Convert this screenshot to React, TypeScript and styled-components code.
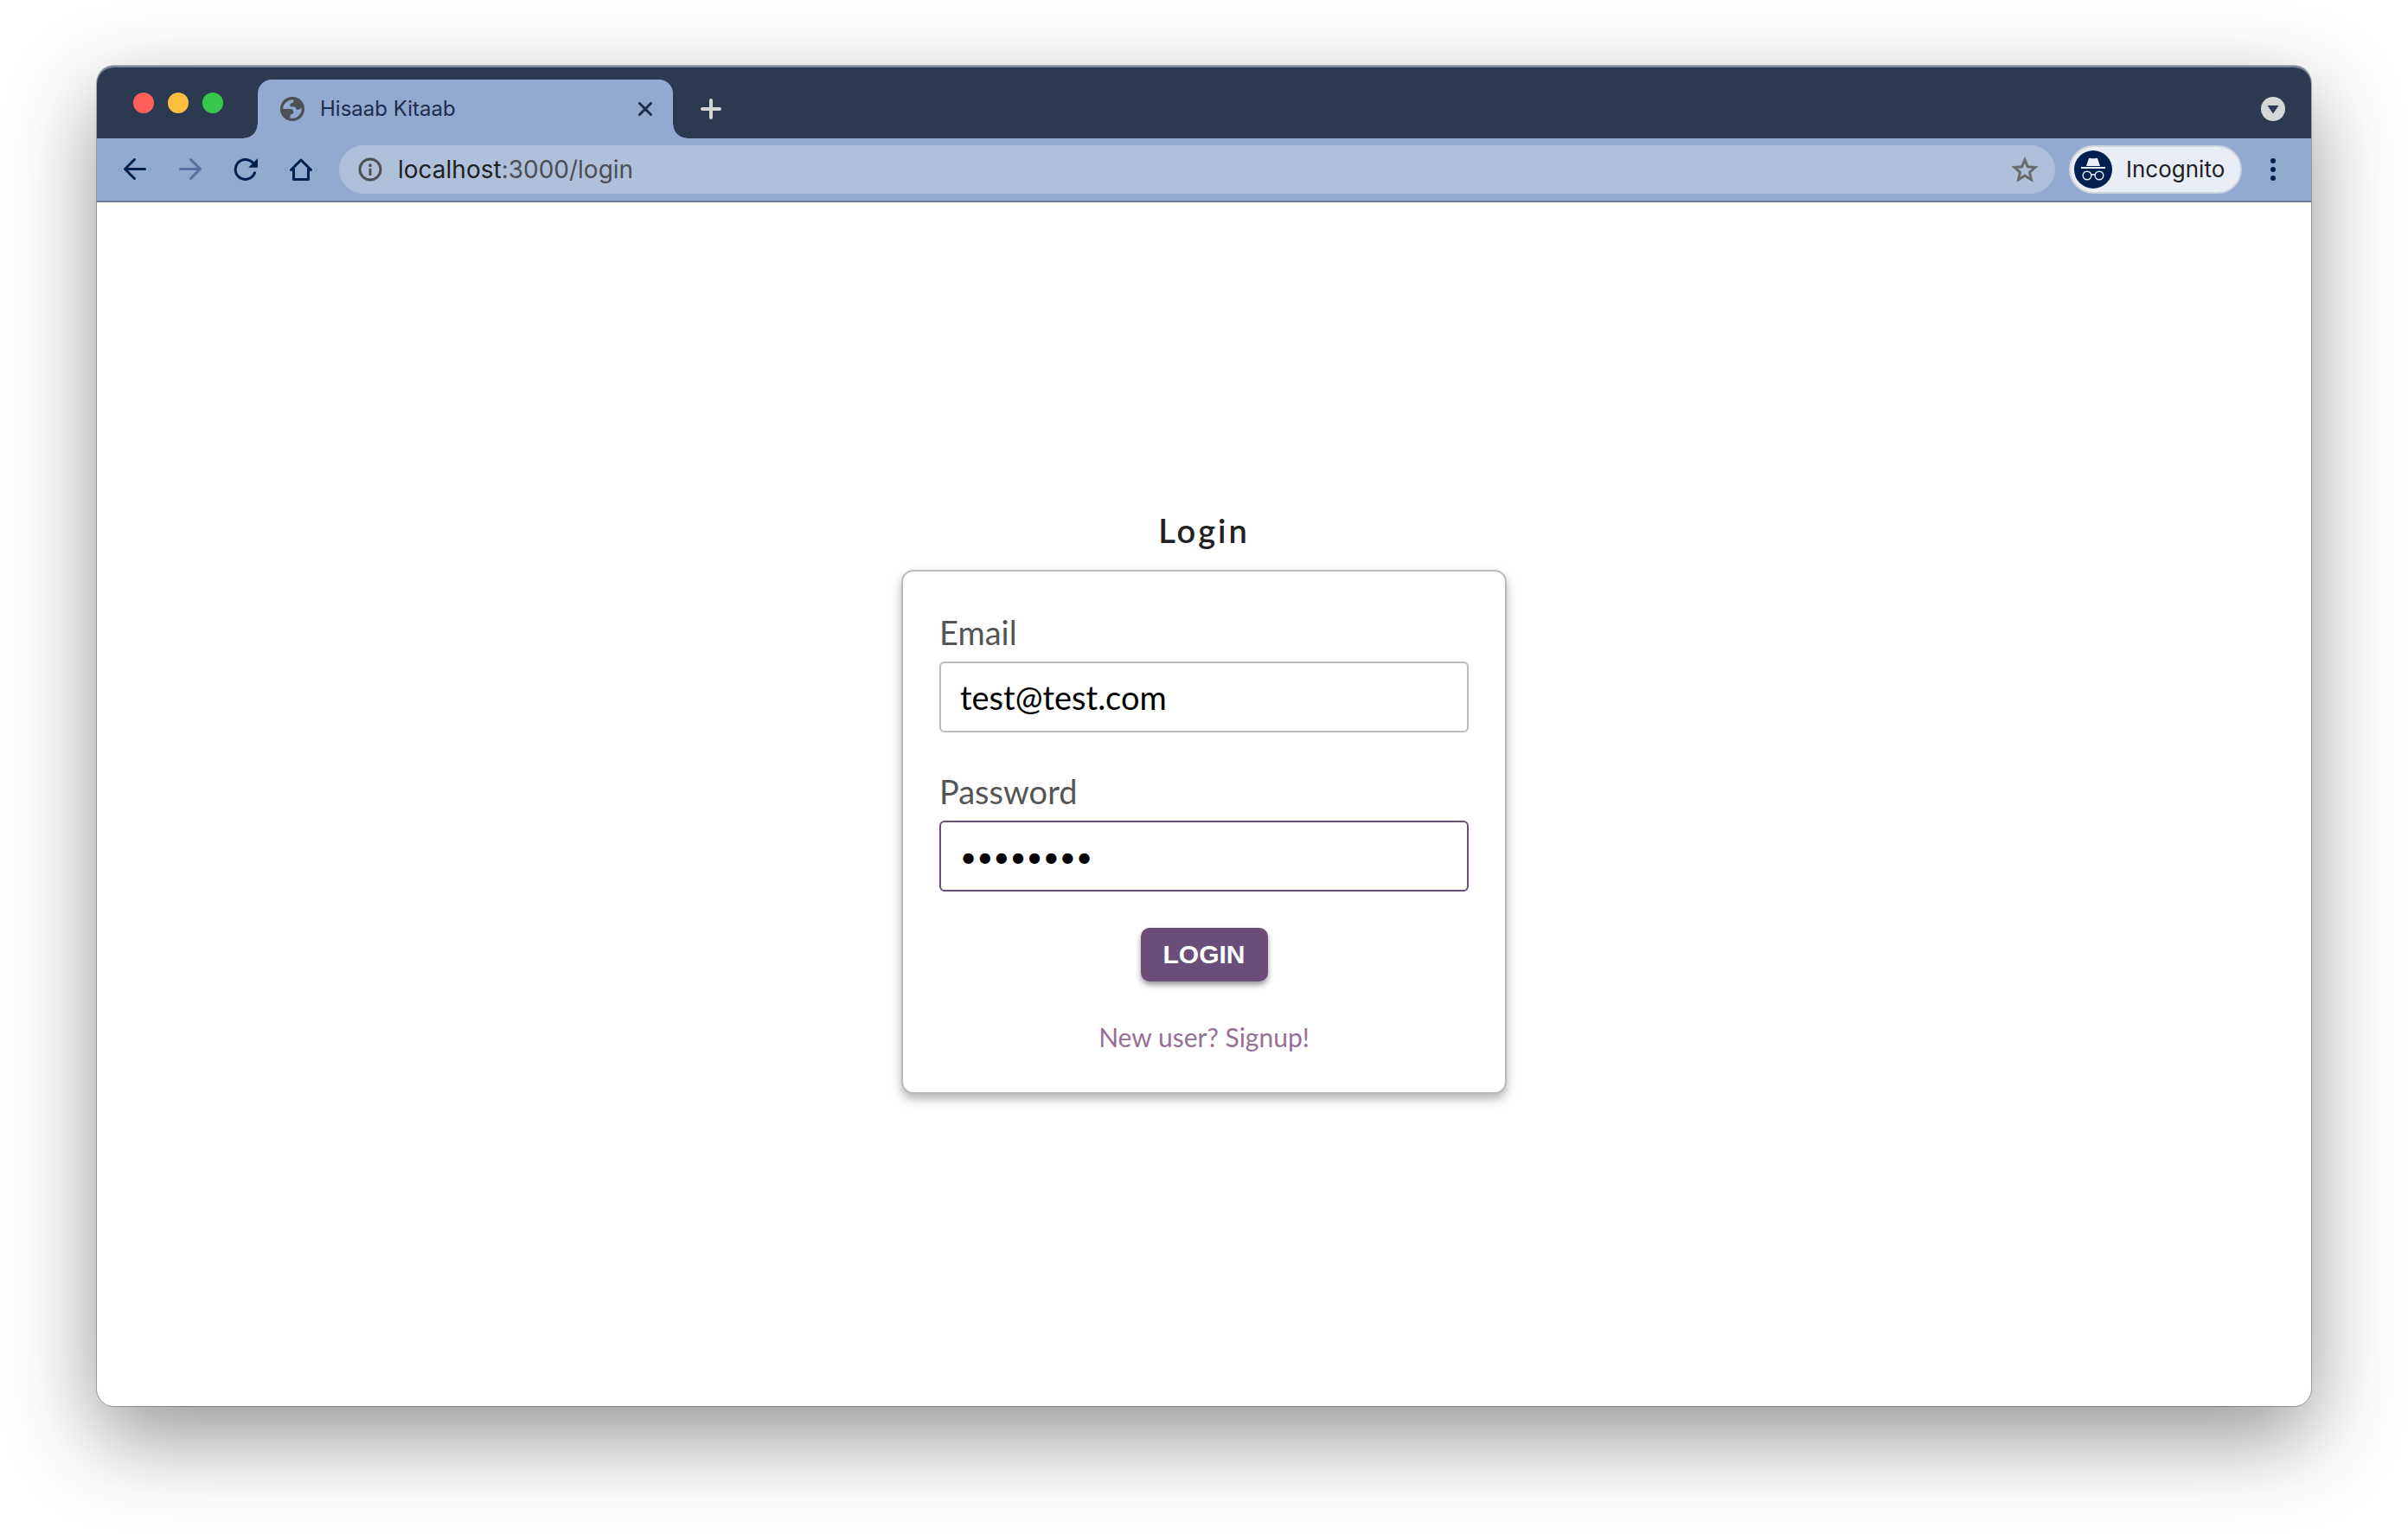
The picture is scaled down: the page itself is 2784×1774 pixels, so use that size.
import React, { useState } from "react";
import styled, { createGlobalStyle } from "styled-components";

const ui = `Inter, "Noto Sans", sans-serif`;
const page = `Lato, "Open Sans", sans-serif`;

const GlobalStyle = createGlobalStyle`
  *, *::before, *::after { box-sizing: border-box; }
  body { margin: 0; background: #fff; }
  button, input { font: inherit; color: inherit; }
  svg { display: block; flex: none; }
`;

const Desktop = styled.div`
  display: flex;
  min-height: 100vh;
  padding: 76px 112px 148px;
  font-family: ${ui};
`;

const Window = styled.div`
  flex: 1;
  display: flex;
  flex-direction: column;
  border-radius: 20px;
  background: #fff;
  box-shadow: 0 0 0 1px rgba(0, 0, 0, 0.25), 0 36px 100px rgba(0, 0, 0, 0.42);
`;

const TitleBar = styled.header`
  display: flex;
  align-items: flex-end;
  height: 84px;
  padding: 0 30px 0 42px;
  border-radius: 20px 20px 0 0;
  background: #2b3a51;
  box-shadow: inset 0 2px 0 #7d8795;
`;

const Lights = styled.div`
  display: flex;
  align-self: center;
  gap: 16px;
  padding-top: 2px;
`;

const Light = styled.button<{ $color: string }>`
  width: 24px;
  height: 24px;
  padding: 0;
  border: 0;
  border-radius: 50%;
  background: ${(p) => p.$color};
`;

const Tab = styled.div`
  position: relative;
  display: flex;
  align-items: center;
  gap: 18px;
  width: 480px;
  height: 68px;
  margin-left: 40px;
  padding: 0 24px 0 26px;
  border-radius: 16px 16px 0 0;
  background: #92a9d0;
  color: #1d2d4b;
  font-size: 24px;
  line-height: 32px;

  &::before, &::after {
    content: "";
    position: absolute;
    bottom: 0;
    width: 16px;
    height: 16px;
  }
  &::before {
    left: -16px;
    background: radial-gradient(circle at 0 0, transparent 15px, #92a9d0 16px);
  }
  &::after {
    right: -16px;
    background: radial-gradient(circle at 100% 0, transparent 15px, #92a9d0 16px);
  }
`;

const TabTitle = styled.span`
  flex: 1;
`;

const IconButton = styled.button<{ $size: number }>`
  display: grid;
  place-items: center;
  width: ${(p) => p.$size}px;
  height: ${(p) => p.$size}px;
  padding: 0;
  border: 0;
  background: none;

  &:disabled { color: #5670a1; }
`;

const StripActions = styled.div`
  flex: 1;
  display: flex;
  align-items: center;
  justify-content: space-between;
  height: 68px;
  padding-left: 30px;
`;

const Toolbar = styled.nav`
  display: flex;
  align-items: center;
  height: 74px;
  padding: 0 30px;
  border-bottom: 2px solid #6d7da0;
  background: #92a9d0;
  color: #00204f;
`;

const NavButtons = styled.div`
  display: flex;
  gap: 36px;
  margin-right: 30px;
`;

const AddressBar = styled.div`
  flex: 1;
  display: flex;
  align-items: center;
  gap: 18px;
  height: 56px;
  padding: 0 20px 0 22px;
  border-radius: 28px;
  background: #afc0db;
  color: #4b4e55;
`;

const Url = styled.span`
  flex: 1;
  font-size: 28px;
  line-height: 36px;
`;

const Host = styled.span`
  color: #1e2023;
`;

const Profile = styled.button`
  display: flex;
  align-items: center;
  gap: 16px;
  width: 200px;
  height: 56px;
  margin: 0 22px 0 16px;
  padding: 0 0 0 4px;
  border: 2px solid #cdd3df;
  border-radius: 28px;
  background: #e8edf6;
  color: #1e2023;
  font-size: 26px;
  line-height: 36px;
`;

const Content = styled.main`
  flex: 1;
  display: flex;
  flex-direction: column;
  align-items: center;
  justify-content: center;
  padding-bottom: 8px;
  font-family: ${page};
`;

const Heading = styled.h1`
  margin: 0 0 20px;
  color: #222;
  font-size: 38px;
  font-weight: 600;
  line-height: 52px;
  letter-spacing: 3px;
`;

const Card = styled.form`
  display: flex;
  flex-direction: column;
  align-items: center;
  width: 700px;
  padding: 44px 42px;
  border: 2px solid #bbb;
  border-radius: 14px;
  background: #fff;
  box-shadow: 0 6px 12px rgba(0, 0, 0, 0.3);
`;

const Field = styled.label`
  display: flex;
  flex-direction: column;
  gap: 8px;
  width: 100%;
  margin-bottom: 42px;
  color: #555;
  font-size: 38px;
  line-height: 52px;
`;

const TextInput = styled.input`
  width: 100%;
  height: 82px;
  padding: 0 22px;
  border: 2px solid #bbb;
  border-radius: 6px;
  outline: 0;
  background: #fff;
  color: #000;

  &[type="password"] {
    border-color: #6a4e79;
    font-size: 33px;
  }
`;

const Submit = styled.button`
  height: 62px;
  padding: 0 26px;
  border: 0;
  border-radius: 10px;
  background: #6a4e79;
  box-shadow: 0 4px 6px rgba(0, 0, 0, 0.4);
  color: #fff;
  font-family: "Liberation Sans", Arial, sans-serif;
  font-size: 30px;
  font-weight: 700;
`;

const SignupLink = styled.a`
  margin-top: 44px;
  color: #976f97;
  font-size: 30px;
  line-height: 40px;
  text-decoration: none;
`;

const Glyph = ({ size = 28, children }: { size?: number; children: React.ReactNode }) => (
  <svg width={size} height={size} viewBox={`0 0 ${size} ${size}`} fill="none" stroke="currentColor" aria-hidden="true">
    {children}
  </svg>
);

export default function App() {
  const [email, setEmail] = useState("test@test.com");
  const [password, setPassword] = useState("password");

  return (
    <>
      <GlobalStyle />
      <Desktop>
        <Window>
          <TitleBar>
            <Lights>
              <Light $color="#ff5f5a" aria-label="Close window" />
              <Light $color="#ffbd3f" aria-label="Minimise window" />
              <Light $color="#35c84a" aria-label="Zoom window" />
            </Lights>
            <Tab>
              <Glyph>
                <circle cx="14" cy="14" r="14" fill="#4d5156" stroke="none" />
                <path
                  d="M3.2 14A10.8 10.8 0 0 1 15.5 3.4V5c0 1.800-1.600 2-3 2.500-1.700.7-1.500 3.800.3 4H16c2.300.3 1.800 3.600 4 3.600 1.800 0 2.800-1.600 4.700-1.800A10.800 10.800 0 0 1 11.500 24.500V21.500c.3-1.700 3.800-1 3.900-3.700.1-2.500-1.800-3.800-4-3.800Z"
                  fill="#92a9d0"
                  stroke="none"
                />
              </Glyph>
              <TabTitle>Hisaab Kitaab</TabTitle>
              <IconButton $size={16} aria-label="Close tab">
                <Glyph size={16}>
                  <path d="M1.5 1.5l13 13M14.5 1.5l-13 13" strokeWidth="3" strokeLinecap="round" />
                </Glyph>
              </IconButton>
            </Tab>
            <StripActions>
              <IconButton $size={28} aria-label="New tab">
                <Glyph>
                  <path d="M14 4v20M4 14h20" stroke="#d5d7d6" strokeWidth="4" strokeLinecap="round" />
                </Glyph>
              </IconButton>
              <IconButton $size={28} aria-label="Search tabs">
                <Glyph>
                  <circle cx="14" cy="14" r="14" fill="#d5d7d6" stroke="none" />
                  <path d="M7.500 10h13L14 19.500z" fill="#2b3a51" stroke="none" />
                </Glyph>
              </IconButton>
            </StripActions>
          </TitleBar>
          <Toolbar>
            <NavButtons>
              <IconButton $size={28} aria-label="Back">
                <Glyph>
                  <path d="M25.500 13.500H3M13.500 2.500l-11 11 11 11" strokeWidth="3" strokeLinecap="round" strokeLinejoin="round" />
                </Glyph>
              </IconButton>
              <IconButton $size={28} aria-label="Forward" disabled>
                <Glyph>
                  <path d="M2.500 13.500H25M14.500 2.500l11 11-11 11" strokeWidth="3" strokeLinecap="round" strokeLinejoin="round" />
                </Glyph>
              </IconButton>
              <IconButton $size={28} aria-label="Reload">
                <Glyph>
                  <path d="M24.500 17.800A11.500 11.500 0 1 1 22.500 6.500" strokeWidth="3" strokeLinecap="round" />
                  <path d="M28 1v10.800H17.200z" fill="currentColor" stroke="none" />
                </Glyph>
              </IconButton>
              <IconButton $size={28} aria-label="Home">
                <Glyph>
                  <path d="M2.500 14.500L14 3l11.500 11.500M5.500 12.500v13h17v-13" strokeWidth="3" strokeLinecap="round" strokeLinejoin="round" />
                </Glyph>
              </IconButton>
            </NavButtons>
            <AddressBar>
              <Glyph>
                <circle cx="14" cy="14" r="12" strokeWidth="3" />
                <path d="M14 7.500v3.500M14 12.800v8.200" strokeWidth="3" />
              </Glyph>
              <Url><Host>localhost</Host>:3000/login</Url>
              <IconButton $size={30} aria-label="Bookmark this page">
                <svg width="30" height="30" viewBox="2 1.5 20 20" fill="#67696c" stroke="#67696c" strokeWidth="0.4" aria-hidden="true">
                  <path d="M22 9.240l-7.190-.62L12 2 9.190 8.630 2 9.240l5.460 4.730L5.820 21 12 17.270 18.180 21l-1.630-7.030L22 9.240zM12 15.400l-3.760 2.270 1-4.280-3.320-2.880 4.380-.38L12 6.100l1.710 4.040 4.380.38-3.320 2.880 1 4.280L12 15.400z" />
                </svg>
              </IconButton>
            </AddressBar>
            <Profile>
              <Glyph size={44}>
                <circle cx="22" cy="22" r="22" fill="#00204f" stroke="none" />
                <path d="M14 18l2.600-8c.3-1 1-1.400 2-1.200 2.300.7 4.500.7 6.800 0 1-.2 1.700.2 2 1.200L30 18z" fill="#e8edf6" stroke="none" />
                <g stroke="#e8edf6">
                  <path d="M8 20h28" strokeWidth="2" />
                  <circle cx="15" cy="29" r="4.800" strokeWidth="1.500" />
                  <circle cx="29" cy="29" r="4.800" strokeWidth="1.500" />
                  <path d="M19.800 28.500c1.500-1 2.900-1 4.400 0" strokeWidth="1.500" />
                </g>
              </Glyph>
              Incognito
            </Profile>
            <IconButton $size={28} aria-label="Menu">
              <Glyph>
                <g fill="currentColor" stroke="none">
                  <circle cx="14" cy="4" r="3" />
                  <circle cx="14" cy="14" r="3" />
                  <circle cx="14" cy="24" r="3" />
                </g>
              </Glyph>
            </IconButton>
          </Toolbar>
          <Content>
            <Heading>Login</Heading>
            <Card onSubmit={(e) => e.preventDefault()}>
              <Field>
                Email
                <TextInput type="email" value={email} onChange={(e) => setEmail(e.target.value)} />
              </Field>
              <Field>
                Password
                <TextInput type="password" value={password} onChange={(e) => setPassword(e.target.value)} />
              </Field>
              <Submit type="submit">LOGIN</Submit>
              <SignupLink href="#signup">New user? Signup!</SignupLink>
            </Card>
          </Content>
        </Window>
      </Desktop>
    </>
  );
}
